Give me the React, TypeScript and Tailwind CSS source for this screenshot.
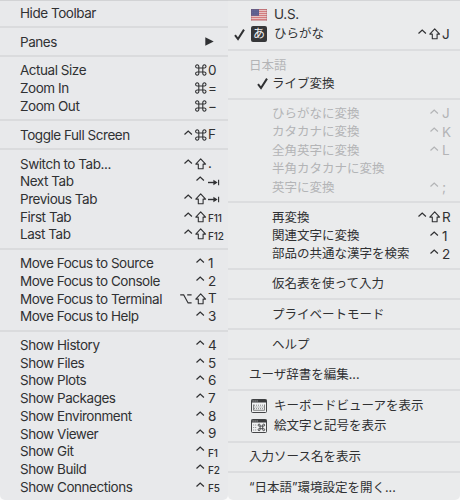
import React from "react";

type Mod = "ctrl" | "shift" | "cmd" | "opt";

const stroke = {
  fill: "none",
  stroke: "currentColor",
  strokeWidth: 1.1,
} as const;

function ModIcon({ mod }: { mod: Mod }) {
  return (
    <svg width="12" height="14" viewBox="0 0 12 14" className={mod === "opt" ? "mr-0.5 shrink-0 overflow-visible" : "shrink-0"}>
      {mod === "ctrl" && <path d="M1.5 6.5 5.2 3.1 8.9 6.5" {...stroke} strokeWidth={1.25} />}
      {mod === "shift" && (
        <path d="M5.7 1.9 10.6 7.1H8.1V11.7H3.3V7.1H0.8Z" {...stroke} strokeLinejoin="round" />
      )}
      {mod === "cmd" && (
        <path
          d="M3.8 5H7.8V9H3.8ZM3.8 5H2.4A1.6 1.6 0 1 1 3.8 3.5ZM7.8 5V3.5A1.6 1.6 0 1 1 9.2 5ZM7.8 9H9.2A1.6 1.6 0 1 1 7.8 10.5ZM3.8 9V10.5A1.6 1.6 0 1 1 2.4 9Z"
          {...stroke}
        />
      )}
      {mod === "opt" && <path d="M-0.8 2.9H2.7L7.1 10.9H10.6M6.2 2.9H10.6" {...stroke} />}
    </svg>
  );
}

function TabIcon() {
  return (
    <svg width="13" height="14" viewBox="0 0 13 14" className="shrink-0">
      <path d="M0 6.5H8" {...stroke} strokeWidth={1.4} />
      <path d="M5.4 3.8 9.6 6.5 5.4 9.2Z" fill="currentColor" />
      <path d="M10.6 3.8V9.2" {...stroke} />
    </svg>
  );
}

function Check() {
  return (
    <svg width="11" height="13" viewBox="0 0 11 13" className="shrink-0">
      <path d="M1 7.2 4 11 10 1.6" fill="none" stroke="currentColor" strokeWidth="2" />
    </svg>
  );
}

function Flag() {
  return (
    <svg width="16" height="12" viewBox="0 0 16 12" className="mt-0.5 shrink-0">
      <rect width="16" height="12" fill="#e9cccb" />
      {[0, 2, 4, 6, 8, 10].map((y) => (
        <rect key={y} y={y} width="16" height="1.1" fill="#d37d7e" />
      ))}
      <rect width="8" height="6.8" fill="#5a5d8d" />
      {[1.2, 3.2, 5.2].map((y) => (
        <path key={y} d={`M1 ${y}H7.5`} stroke="#8082aa" strokeWidth="0.6" strokeDasharray="0.8 1" />
      ))}
      <rect x="0.25" y="0.25" width="15.5" height="11.5" fill="none" stroke="#8c5a68" strokeOpacity="0.5" strokeWidth="0.5" />
    </svg>
  );
}

function WindowIcon({ kind }: { kind: "keyboard" | "symbols" }) {
  return (
    <svg width="16" height="14" viewBox="0 0 16 14" className="shrink-0">
      <rect x="0.5" y="0.5" width="15" height="13" rx="1" fill="#f0f1f2" stroke="#454648" />
      <rect x="0.5" y="0.5" width="15" height="3" fill="#3b3c3e" />
      <path d="M1.6 2H2.6M3.6 2H4.6M5.6 2H6.6" stroke="#e6e7e8" strokeWidth="0.9" />
      {kind === "keyboard" ? (
        <g fill="none" stroke="#555658" strokeWidth="0.7">
          <path d="M2.5 5.5V11.3H13.5V5.5" />
          <path d="M3 6.2H13" strokeDasharray="1 1" />
          <path d="M3.5 8H13" strokeDasharray="1 1" />
          <path d="M3 9.7H13" strokeDasharray="1 1" />
        </g>
      ) : (
        <g fill="none" stroke="#3b3c3e">
          <path d="M2.2 6H6M2.2 8.5H6M2.2 11H6" stroke="#77787a" strokeWidth="0.9" strokeDasharray="1 1" />
          <path
            d="M9.1 7.1H11.7V9.7H9.1ZM9.1 7.1H8.2A1 1 0 1 1 9.1 6.2ZM11.7 7.1V6.2A1 1 0 1 1 12.6 7.1ZM11.7 9.7H12.6A1 1 0 1 1 11.7 10.6ZM9.1 9.7V10.6A1 1 0 1 1 8.2 9.7Z"
            strokeWidth="0.9"
          />
        </g>
      )}
    </svg>
  );
}

type Item = { label: string; mods?: Mod[]; k?: string; submenu?: boolean };

const viewMenu: Item[][] = [
  [{ label: "Hide Toolbar" }],
  [{ label: "Panes", submenu: true }],
  [
    { label: "Actual Size", mods: ["cmd"], k: "0" },
    { label: "Zoom In", mods: ["cmd"], k: "=" },
    { label: "Zoom Out", mods: ["cmd"], k: "−" },
  ],
  [{ label: "Toggle Full Screen", mods: ["ctrl", "cmd"], k: "F" }],
  [
    { label: "Switch to Tab...", mods: ["ctrl", "shift"], k: "." },
    { label: "Next Tab", mods: ["ctrl"], k: "tab" },
    { label: "Previous Tab", mods: ["ctrl", "shift"], k: "tab" },
    { label: "First Tab", mods: ["ctrl", "shift"], k: "F11" },
    { label: "Last Tab", mods: ["ctrl", "shift"], k: "F12" },
  ],
  [
    { label: "Move Focus to Source", mods: ["ctrl"], k: "1" },
    { label: "Move Focus to Console", mods: ["ctrl"], k: "2" },
    { label: "Move Focus to Terminal", mods: ["opt", "shift"], k: "T" },
    { label: "Move Focus to Help", mods: ["ctrl"], k: "3" },
  ],
  [
    { label: "Show History", mods: ["ctrl"], k: "4" },
    { label: "Show Files", mods: ["ctrl"], k: "5" },
    { label: "Show Plots", mods: ["ctrl"], k: "6" },
    { label: "Show Packages", mods: ["ctrl"], k: "7" },
    { label: "Show Environment", mods: ["ctrl"], k: "8" },
    { label: "Show Viewer", mods: ["ctrl"], k: "9" },
    { label: "Show Git", mods: ["ctrl"], k: "F1" },
    { label: "Show Build", mods: ["ctrl"], k: "F2" },
    { label: "Show Connections", mods: ["ctrl"], k: "F5" },
  ],
];

function Keys({ mods = [], k = "", keyWidth }: { mods?: Mod[]; k?: string; keyWidth: string }) {
  const small = k.length > 1;
  return (
    <span className="ml-auto flex items-center">
      {mods.map((m) => (
        <ModIcon key={m} mod={m} />
      ))}
      <span
        className={`${keyWidth} ml-px ${small ? "pt-[3px] text-[10px] font-medium tracking-[-0.2px]" : "pt-px text-[13.5px]"}`}
      >
        {k === "tab" ? <TabIcon /> : k}
      </span>
    </span>
  );
}

function LeftSeparator() {
  return (
    <div className="flex h-[11.2px] items-center">
      <div className="h-[2px] w-full bg-[#dadbdd]" />
    </div>
  );
}

function RightSeparator() {
  return (
    <div className="flex h-[11.7px] items-center">
      <div className="h-[2px] w-full bg-[#dcdddf]" />
    </div>
  );
}

type ImeItem = {
  label: string;
  mods?: Mod[];
  k?: string;
  icon?: "flag" | "kana" | "keyboard" | "symbols";
  checked?: boolean;
  dim?: boolean;
  inset?: boolean;
};

const imeMenu: ImeItem[][] = [
  [
    { label: "U.S.", icon: "flag" },
    { label: "ひらがな", icon: "kana", checked: true, mods: ["ctrl", "shift"], k: "J" },
  ],
  [
    { label: "日本語", dim: true },
    { label: "ライブ変換", inset: true, checked: true },
  ],
  [
    { label: "ひらがなに変換", inset: true, dim: true, mods: ["ctrl"], k: "J" },
    { label: "カタカナに変換", inset: true, dim: true, mods: ["ctrl"], k: "K" },
    { label: "全角英字に変換", inset: true, dim: true, mods: ["ctrl"], k: "L" },
    { label: "半角カタカナに変換", inset: true, dim: true },
    { label: "英字に変換", inset: true, dim: true, mods: ["ctrl"], k: ";" },
  ],
  [
    { label: "再変換", inset: true, mods: ["ctrl", "shift"], k: "R" },
    { label: "関連文字に変換", inset: true, mods: ["ctrl"], k: "1" },
    { label: "部品の共通な漢字を検索", inset: true, mods: ["ctrl"], k: "2" },
  ],
  [{ label: "仮名表を使って入力", inset: true }],
  [{ label: "プライベートモード", inset: true }],
  [{ label: "ヘルプ", inset: true }],
  [{ label: "ユーザ辞書を編集..." }],
  [
    { label: "キーボードビューアを表示", icon: "keyboard" },
    { label: "絵文字と記号を表示", icon: "symbols" },
  ],
  [{ label: "入力ソース名を表示" }],
  [{ label: "“日本語”環境設定を開く..." }],
];

function ItemIcon({ icon }: { icon: NonNullable<ImeItem["icon"]> }) {
  if (icon === "flag") return <Flag />;
  if (icon === "kana")
    return (
      <span className="flex size-4 items-center justify-center rounded-[2px] bg-[#363739] text-[12px] leading-none text-[#f2f2f3]">
        あ
      </span>
    );
  return <WindowIcon kind={icon} />;
}

function ImeRow({ item }: { item: ImeItem }) {
  const { icon, inset, checked, dim } = item;
  return (
    <div
      className={`flex items-center ${icon ? "h-[20.5px]" : "h-[18.4px]"} ${dim ? "text-[#b3b4b6]" : "text-[#303133]"}`}
    >
      <span className={`flex shrink-0 justify-end ${inset ? "w-[44px] pr-1" : icon ? "w-[23px] pr-1.5" : "w-[21px]"}`}>
        {checked && <Check />}
      </span>
      {icon && (
        <span className="mr-[7px] flex w-4 shrink-0">
          <ItemIcon icon={icon} />
        </span>
      )}
      <span className={item.label === "U.S." ? "pt-[2px] text-[13.5px] tracking-[-0.3px]" : "pt-px text-[12.5px]"}>
        {item.label}
      </span>
      {item.k && <Keys mods={item.mods} k={item.k} keyWidth="w-[18px]" />}
    </div>
  );
}

export default function App() {
  return (
    <div className="flex h-[500px] w-[460px] overflow-hidden whitespace-nowrap bg-[#fbfbfb] font-[Inter,'Noto_Sans_CJK_JP',sans-serif] text-[13.5px] leading-none text-[#303133]">
      <div className="h-[500px] w-[228px] rounded-b-[5px] border-t border-[#d2d3d5] bg-[#e8e9eb] pt-[2.8px]">
        {viewMenu.map((group, i) => (
          <React.Fragment key={i}>
            {i > 0 && <LeftSeparator />}
            {group.map((item) => (
              <div key={item.label} className="flex h-[17.7px] items-center pl-5">
                <span className="pt-[1.5px] text-[13.5px] tracking-[-0.46px]">{item.label}</span>
                {item.k && <Keys mods={item.mods} k={item.k} keyWidth="w-5" />}
                {item.submenu && (
                  <svg width="9" height="9" viewBox="0 0 9 9" className="ml-auto mr-3.5">
                    <path d="M0.3 0.3 8.7 4.5 0.3 8.7Z" fill="currentColor" />
                  </svg>
                )}
              </div>
            ))}
          </React.Fragment>
        ))}
      </div>
      <div className="h-[500px] w-[232px] rounded-b-[5px] border-t border-[#d4d5d7] bg-[#eaebec] pt-[2.4px]">
        {imeMenu.map((group, i) => (
          <React.Fragment key={i}>
            {i > 0 && <RightSeparator />}
            {group.map((item) => (
              <ImeRow key={item.label} item={item} />
            ))}
          </React.Fragment>
        ))}
      </div>
    </div>
  );
}
